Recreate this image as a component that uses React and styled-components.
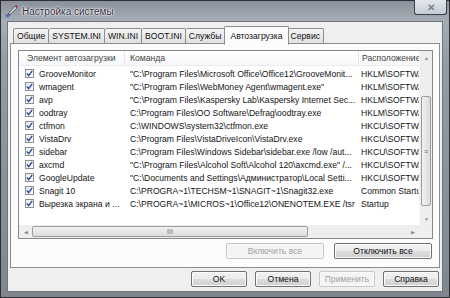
import React from 'react';
import styled, { createGlobalStyle } from 'styled-components';

const GlobalStyle = createGlobalStyle`
	html, body {
		margin: 0;
		padding: 0;
		width: 450px;
		height: 298px;
		overflow: hidden;
		background: #5b6168;
	}
	* { box-sizing: border-box; }
`;

const Frame = styled.div`
	width: 450px;
	height: 298px;
	display: flex;
	flex-direction: column;
	padding: 0 6px 5px 6px;
	background: linear-gradient(180deg, #8a919a 0px, #a6adb5 20px, #959ca4 60px, #7f868e 298px);
	border: 1px solid #2c3035;
	font-family: "Liberation Sans", Arial, sans-serif;
	font-size: 8.6px;
	color: #111;
`;

const TitleBar = styled.div`
	height: 20px;
	flex-shrink: 0;
	display: flex;
	align-items: center;
	gap: 3px;
	margin-left: -2px;
`;

const Title = styled.span`
	font-size: 10px;
	color: #2f2a3c;
	text-shadow: 0 0 3px #fff, 0 0 2px #fff, 0 0 1px #fff;
	flex: 1;
`;

const CloseButton = styled.div`
	width: 33px;
	height: 15px;
	align-self: flex-start;
	margin-top: -1px;
	margin-right: -4px;
	border: 1px solid #3d4249;
	border-top: none;
	border-radius: 0 0 3px 3px;
	background: linear-gradient(180deg, #e3e8ee, #c5ccd5);
	display: flex;
	align-items: center;
	justify-content: center;
	color: #7d838b;
	font-size: 10px;
	font-weight: bold;
`;

const Client = styled.div`
	flex: 1;
	background: #efefef;
	border: 1px solid #6f757c;
	display: flex;
	flex-direction: column;
	padding: 4px 2px 4px 2px;
`;

const TabStrip = styled.div`
	display: flex;
	align-items: flex-end;
	height: 18px;
	padding-left: 3px;
	position: relative;
	z-index: 1;
`;

const Tab = styled.div`
	height: ${p => (p.$active ? '19px' : '16px')};
	padding: 0 ${p => (p.$active ? '5px' : '3px')};
	margin: 0 ${p => (p.$active ? '-1px' : '0')};
	display: flex;
	align-items: center;
	border: 1px solid #898c95;
	border-bottom: ${p => (p.$active ? '1px solid #fcfcfc' : '1px solid #898c95')};
	border-left-width: ${p => (p.$first || p.$active ? '1px' : '0')};
	background: ${p => (p.$active ? '#fcfcfc' : 'linear-gradient(180deg, #f4f4f4, #e1e1e1)')};
	border-radius: 2px 2px 0 0;
	margin-bottom: ${p => (p.$active ? '-1px' : '0')};
	position: relative;
	z-index: ${p => (p.$active ? 2 : 0)};
	white-space: nowrap;
`;

const Panel = styled.div`
	height: 225px;
	background: #fcfcfc;
	border: 1px solid #898c95;
	margin-top: -1px;
	padding: 6px 6px 0 7px;
	display: flex;
	flex-direction: column;
`;

const ListView = styled.div`
	height: 189px;
	border: 1px solid #828790;
	background: #fff;
	display: flex;
	flex-direction: column;
`;

const ListBody = styled.div`
	flex: 1;
	display: flex;
	min-height: 0;
`;

const Viewport = styled.div`
	flex: 1;
	overflow: hidden;
	min-width: 0;
`;

const Grid = styled.div`
	display: grid;
	grid-template-columns: 106px 234px 140px;
	width: 480px;
`;

const HeaderCell = styled.div`
	height: 15px;
	display: flex;
	align-items: center;
	padding-left: ${p => p.$pad || 5}px;
	color: #444;
	border-right: 1px solid #e3e5e8;
	border-bottom: 1px solid #eaecef;
	background: linear-gradient(180deg, #fff, #f6f7f9);
	white-space: nowrap;
	margin-bottom: 1px;
`;

const Cell = styled.div`
	height: 13px;
	display: flex;
	align-items: center;
	gap: 5px;
	padding-left: ${p => p.$pad || 5}px;
	white-space: nowrap;
	overflow: hidden;
	color: #141414;
`;

const Check = styled.span`
	width: 9px;
	height: 9px;
	border: 1px solid #8e8f8f;
	background: linear-gradient(135deg, #e8eaec, #fff);
	display: inline-flex;
	align-items: center;
	justify-content: center;
	flex-shrink: 0;
`;

const VScroll = styled.div`
	width: 13px;
	display: flex;
	flex-direction: column;
	background: #eeeeee;
	border-left: 1px solid #f4f4f4;
`;

const HScroll = styled.div`
	height: 13px;
	display: flex;
	background: #eeeeee;
`;

const Arrow = styled.div`
	width: 13px;
	height: 13px;
	flex-shrink: 0;
	display: flex;
	align-items: center;
	justify-content: center;
	color: #8a8a8a;
	font-size: 5px;
`;

const Track = styled.div`
	flex: 1;
	display: flex;
	flex-direction: ${p => (p.$vertical ? 'column' : 'row')};
`;

const Thumb = styled.div`
	border: 1px solid #9a9da2;
	border-radius: 2px;
	background: ${p => (p.$vertical
		? 'linear-gradient(90deg, #f1f1f1, #dcdcdc)'
		: 'linear-gradient(180deg, #f1f1f1, #dcdcdc)')};
	display: flex;
	align-items: center;
	justify-content: center;
	color: #707070;
	font-size: 7px;
	line-height: 1;
	margin: ${p => (p.$vertical ? '0 1px' : '1px 0')};
`;

const Corner = styled.div`
	width: 13px;
	height: 13px;
	background: #efefef;
`;

const PanelButtons = styled.div`
	display: flex;
	justify-content: flex-end;
	gap: 10px;
	margin-top: 4px;
	padding-right: 1px;
`;

const Button = styled.div`
	width: ${p => p.$w}px;
	height: 16px;
	border: 1px solid ${p => (p.$disabled ? '#c4c6c9' : '#707070')};
	border-radius: 2px;
	background: ${p => (p.$disabled
		? '#f4f4f4'
		: 'linear-gradient(180deg, #f2f2f2 0%, #ebebeb 50%, #dddddd 51%, #cfcfcf 100%)')};
	color: ${p => (p.$disabled ? '#a3a3a3' : '#111')};
	display: flex;
	align-items: center;
	justify-content: center;
	box-shadow: inset 0 0 0 1px ${p => (p.$disabled ? '#f9f9f9' : '#fbfbfb')};
`;

const Footer = styled.div`
	display: flex;
	justify-content: flex-end;
	gap: 8px;
	margin-top: auto;
	padding-right: 1px;
	padding-bottom: 0;
`;

const tabs = ['Общие', 'SYSTEM.INI', 'WIN.INI', 'BOOT.INI', 'Службы', 'Автозагрузка', 'Сервис'];

const rows = [
	['GrooveMonitor', '"C:\\Program Files\\Microsoft Office\\Office12\\GrooveMonit...', 'HKLM\\SOFTWARE'],
	['wmagent', '"C:\\Program Files\\WebMoney Agent\\wmagent.exe"', 'HKLM\\SOFTWARE'],
	['avp', '"C:\\Program Files\\Kaspersky Lab\\Kaspersky Internet Sec...', 'HKLM\\SOFTWARE'],
	['oodtray', 'C:\\Program Files\\OO Software\\Defrag\\oodtray.exe', 'HKLM\\SOFTWARE'],
	['ctfmon', 'C:\\WINDOWS\\system32\\ctfmon.exe', 'HKCU\\SOFTWARE'],
	['VistaDrv', 'C:\\Program Files\\VistaDriveIcon\\VistaDrv.exe', 'HKCU\\SOFTWARE'],
	['sidebar', 'C:\\Program Files\\Windows Sidebar\\sidebar.exe /low /aut...', 'HKCU\\SOFTWARE'],
	['axcmd', '"C:\\Program Files\\Alcohol Soft\\Alcohol 120\\axcmd.exe" /...', 'HKCU\\SOFTWARE'],
	['GoogleUpdate', '"C:\\Documents and Settings\\Администратор\\Local Setti...', 'HKCU\\SOFTWARE'],
	['Snagit 10', 'C:\\PROGRA~1\\TECHSM~1\\SNAGIT~1\\Snagit32.exe', 'Common Startup'],
	['Вырезка экрана и ...', 'C:\\PROGRA~1\\MICROS~1\\Office12\\ONENOTEM.EXE /tsr', 'Startup'],
];

const AppIcon = () => (
	<svg width="14" height="14" viewBox="0 0 14 14">
		<path d="M2 12 L4 9 L10 2 L12 4 L5 11 Z" fill="#c8c8d0" stroke="#4a4a55" strokeWidth="0.7" />
		<path d="M10 2 L12 4 L13 2.5 L11.5 1 Z" fill="#d0206a" />
		<path d="M1 13 L2 12 L5 11 L4 9 Z" fill="#2a2a2a" />
		<rect x="0.5" y="10" width="4" height="3.5" fill="#5a6fb0" opacity="0.8" />
	</svg>
);

const Tick = () => (
	<svg width="7" height="7" viewBox="0 0 7 7">
		<path d="M0.8 3.6 L2.7 5.6 L6.2 0.9" fill="none" stroke="#2c4a9e" strokeWidth="1.4" />
	</svg>
);

export default function App() {
	return (
		<>
			<GlobalStyle />
			<Frame>
				<TitleBar>
					<AppIcon />
					<Title>Настройка системы</Title>
					<CloseButton>✕</CloseButton>
				</TitleBar>
				<Client>
					<TabStrip>
						{tabs.map((t, i) => (
							<Tab key={t} $first={i === 0} $active={t === 'Автозагрузка'}>{t}</Tab>
						))}
					</TabStrip>
					<Panel>
						<ListView>
							<ListBody>
								<Viewport>
									<Grid>
										<HeaderCell $pad={8}>Элемент автозагрузки</HeaderCell>
										<HeaderCell>Команда</HeaderCell>
										<HeaderCell $pad={3}>Расположение</HeaderCell>
										{rows.map(r => (
											<React.Fragment key={r[0]}>
												<Cell $pad={6}><Check><Tick /></Check>{r[0]}</Cell>
												<Cell>{r[1]}</Cell>
												<Cell $pad={2}>{r[2]}</Cell>
											</React.Fragment>
										))}
									</Grid>
								</Viewport>
								<VScroll>
									<Arrow>▲</Arrow>
									<Track $vertical>
										<div style={{ height: 32 }} />
										<Thumb $vertical style={{ height: 110 }}>≡</Thumb>
									</Track>
									<Arrow>▼</Arrow>
								</VScroll>
							</ListBody>
							<HScroll>
								<Arrow>◀</Arrow>
								<Track>
									<Thumb style={{ width: 276 }}>III</Thumb>
								</Track>
								<Arrow>▶</Arrow>
								<Corner />
							</HScroll>
						</ListView>
						<PanelButtons>
							<Button $w={98} $disabled>Включить все</Button>
							<Button $w={98}>Отключить все</Button>
						</PanelButtons>
					</Panel>
					<Footer>
						<Button $w={56}>OK</Button>
						<Button $w={56}>Отмена</Button>
						<Button $w={56} $disabled>Применить</Button>
						<Button $w={56}>Справка</Button>
					</Footer>
				</Client>
			</Frame>
		</>
	);
}
